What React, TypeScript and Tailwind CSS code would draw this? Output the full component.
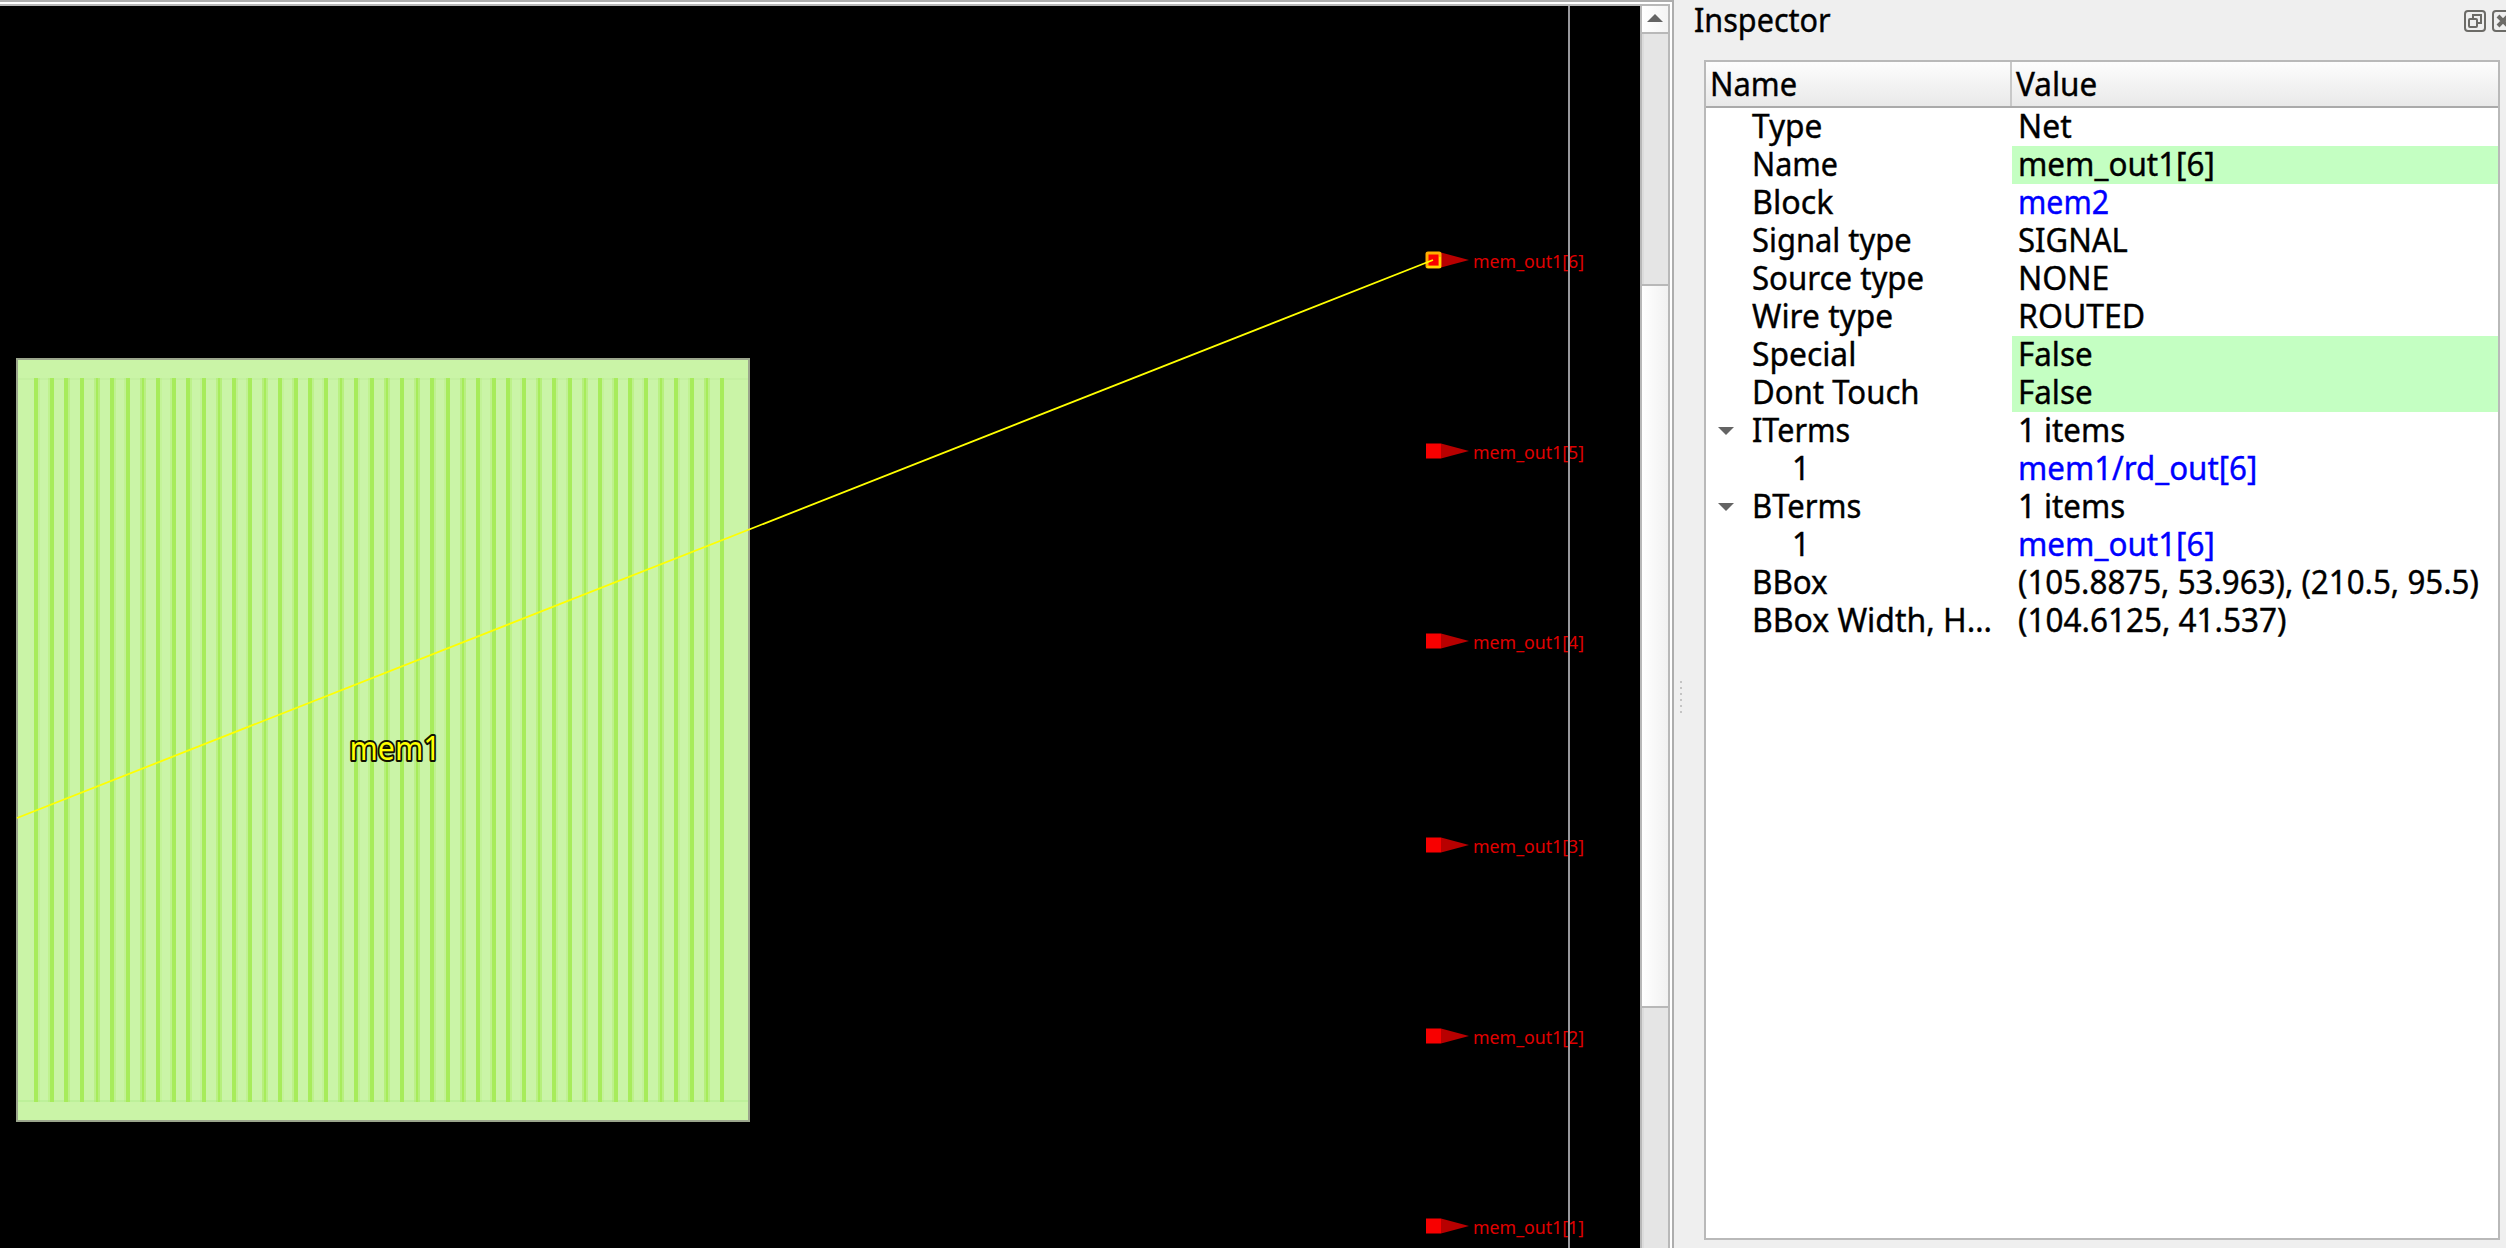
import { useLayoutEffect, useRef } from 'react';

const FONT = "font-['Noto_Sans',sans-serif]";

// Text squeezed horizontally so that its advance equals `w` pixels.
function Fit({ w, children }: { w: number; children: string }) {
  const ref = useRef<HTMLSpanElement>(null);
  useLayoutEffect(() => {
    const el = ref.current;
    if (el) el.style.transform = `scaleX(${w / el.offsetWidth})`;
  }, [w, children]);
  return (
    <span className="block h-[36px] leading-[36px]" style={{ width: w }}>
      <span ref={ref} className="inline-block origin-left whitespace-nowrap [-webkit-text-stroke:0.4px]">
        {children}
      </span>
    </span>
  );
}

type Row = {
  name: string;
  nw: number;
  value: string;
  vw: number;
  edit?: boolean;
  link?: boolean;
  child?: boolean;
  open?: boolean;
};

const rows: Row[] = [
  { name: 'Type', nw: 70, value: 'Net', vw: 54 },
  { name: 'Name', nw: 86, value: 'mem_out1[6]', vw: 197, edit: true },
  { name: 'Block', nw: 81, value: 'mem2', vw: 91, link: true },
  { name: 'Signal type', nw: 160, value: 'SIGNAL', vw: 110 },
  { name: 'Source type', nw: 172, value: 'NONE', vw: 91 },
  { name: 'Wire type', nw: 141, value: 'ROUTED', vw: 127 },
  { name: 'Special', nw: 104, value: 'False', vw: 75, edit: true },
  { name: 'Dont Touch', nw: 168, value: 'False', vw: 75, edit: true },
  { name: 'ITerms', nw: 98, value: '1 items', vw: 107, open: true },
  { name: '1', nw: 18, value: 'mem1/rd_out[6]', vw: 239, link: true, child: true },
  { name: 'BTerms', nw: 109, value: '1 items', vw: 107, open: true },
  { name: '1', nw: 18, value: 'mem_out1[6]', vw: 197, link: true, child: true },
  { name: 'BBox', nw: 76, value: '(105.8875, 53.963), (210.5, 95.5)', vw: 461 },
  { name: 'BBox Width, H…', nw: 240, value: '(104.6125, 41.537)', vw: 268 },
];

const pins = [
  { y: 260, label: 'mem_out1[6]' },
  { y: 451, label: 'mem_out1[5]' },
  { y: 641, label: 'mem_out1[4]' },
  { y: 845, label: 'mem_out1[3]' },
  { y: 1036, label: 'mem_out1[2]' },
  { y: 1226, label: 'mem_out1[1]' },
];

// Stripe coverage on a 2px cell grid.
const stripes: { x: number; o: number }[] = [];
for (let i = 0; i < 46; i++) {
  const a = 17 + i * 7.62;
  const b = a + 2.25;
  for (let c = Math.floor(a); c < b; c++) {
    const o = Math.min(b, c + 1) - Math.max(a, c);
    if (o > 0.15) stripes.push({ x: c * 2, o: o > 0.75 ? 1 : o * 0.8 });
  }
}

function LayoutView() {
  return (
    <svg width="1640" height="1242" viewBox="0 6 1640 1242" className="block bg-black" shapeRendering="crispEdges">
      <rect x="16" y="358" width="734" height="764" fill="#9ba68c" />
      <rect x="18" y="360" width="730" height="760" fill="#caf4a7" />
      <rect x="18" y="378" width="730" height="2" fill="#c4f0a1" />
      <rect x="18" y="1100" width="730" height="2" fill="#bdf09a" />
      {stripes.map((s, i) => (
        <rect key={i} x={s.x} y="378" width="2" height="724" fill="#a7ec5b" opacity={s.o} />
      ))}
      {pins.map((p) => (
        <g key={p.y} shapeRendering="auto">
          <rect x="1426" y={p.y - 7.5} width="15" height="15" fill="#f80000" />
          <path d={`M1441 ${p.y - 7.5} L1469 ${p.y} L1441 ${p.y + 7.5} Z`} fill="#b80000" />
          <text
            x="1473"
            y={p.y + 7.7}
            textLength="111"
            lengthAdjust="spacingAndGlyphs"
            fontSize="18.5"
            fill="#e00000"
            className={FONT}
          >
            {p.label}
          </text>
        </g>
      ))}
      <rect x="1427" y="253" width="13" height="14" rx="1" fill="none" stroke="#ffae00" strokeWidth="3" shapeRendering="auto" />
      <path d="M1427 267 H1440 V257" fill="none" stroke="#ffd800" strokeWidth="2.5" />
      <line x1="17" y1="818" x2="1433" y2="260" stroke="#ffff00" strokeWidth="1.8" shapeRendering="auto" />
      <rect x="1568" y="6" width="2" height="1242" fill="#98989c" />
      <text
        x="349.5"
        y="760"
        textLength="91"
        lengthAdjust="spacingAndGlyphs"
        fontSize="33"
        fill="#ffff00"
        stroke="#111100"
        strokeWidth="4"
        paintOrder="stroke"
        strokeLinejoin="round"
        shapeRendering="auto"
        className={FONT}
      >
        mem1
      </text>
    </svg>
  );
}

function ScrollBar() {
  const track = 'border-l-2 border-[#dcdcdc] bg-[#e5e5e5]';
  return (
    <div className="flex w-[28px] flex-col border-l-2 border-[#b8b8b8]">
      <div className="flex h-[26px] items-center justify-center bg-linear-to-r from-white to-[#f4f4f4]">
        <svg width="16" height="8" viewBox="0 0 16 8" className="mb-0.5">
          <path d="M8 0 L16 8 H0 Z" fill="#646464" />
        </svg>
      </div>
      <div className="h-0.5 bg-[#b8b8b8]" />
      <div className={`h-[250px] ${track}`} />
      <div className="h-[724px] border-y-2 border-[#b8b8b8] bg-linear-to-r from-white to-[#f1f1f1]" />
      <div className={`flex-1 ${track}`} />
    </div>
  );
}

function PanelButtons() {
  return (
    <svg width="42" height="22" viewBox="0 0 42 22" fill="none" stroke="#6c6b67" strokeWidth="2">
      <rect x="1" y="1" width="20" height="20" rx="3" />
      <rect x="5" y="9" width="8" height="8" rx="1" />
      <path d="M9 9 V5 H17 V13 H13" />
      <rect x="29" y="1" width="20" height="20" rx="3" />
      <path d="M34 6 L44 16 M44 6 L34 16" strokeWidth="4" />
    </svg>
  );
}

function Inspector() {
  return (
    <div className="flex min-w-0 flex-1 flex-col pb-2 pl-[14px]">
      <div className="flex h-[60px] items-start">
        <div className="mt-0.5">
          <Fit w={137}>Inspector</Fit>
        </div>
        <div className="mt-[10px] ml-auto">
          <PanelButtons />
        </div>
      </div>
      <div className="mr-1.5 ml-[10px] flex flex-1 flex-col border-2 border-[#b9b9b9] bg-white">
        <div className="flex h-[46px] border-b-2 border-[#aaaaaa] bg-linear-to-b from-[#fdfdfd] to-[#e9e9e9]">
          <div className="w-[306px] border-r-2 border-[#c8c8c8] pt-1 pl-1">
            <Fit w={87}>Name</Fit>
          </div>
          <div className="pt-1 pl-1">
            <Fit w={81}>Value</Fit>
          </div>
        </div>
        {rows.map((r, i) => (
          <div key={i} className="flex h-[38px]">
            <div className="flex w-[306px] shrink-0">
              <div className={`flex items-center pl-3 ${r.child ? 'w-[86px]' : 'w-[46px]'}`}>
                {r.open && (
                  <svg width="16" height="8" viewBox="0 0 16 8">
                    <path d="M0 0 H16 L8 8 Z" fill="#646464" />
                  </svg>
                )}
              </div>
              <Fit w={r.nw}>{r.name}</Fit>
            </div>
            <div className={`flex-1 pl-[6px] ${r.edit ? 'bg-[#c4ffc2]' : ''} ${r.link ? 'text-[#0000ff]' : ''}`}>
              <Fit w={r.vw}>{r.value}</Fit>
            </div>
          </div>
        ))}
      </div>
    </div>
  );
}

export default function App() {
  return (
    <div className={`flex h-[1248px] w-[2506px] overflow-hidden bg-[#efefef] text-[33px] text-black ${FONT}`}>
      <div className="flex h-full w-[1674px] border-t-2 border-r-2 border-[#adadad] bg-white pt-0.5 pr-0.5">
        <div className="flex w-full border-t-2 border-r-2 border-[#b8b8b8]">
          <LayoutView />
          <ScrollBar />
        </div>
      </div>
      <div className="flex w-[6px] flex-col justify-center gap-1 pt-[146px] pl-1">
        {[0, 1, 2, 3, 4, 5].map((i) => (
          <div key={i} className="h-0.5 w-0.5 translate-x-0.5 bg-[#c4c4c4]" />
        ))}
      </div>
      <Inspector />
    </div>
  );
}
